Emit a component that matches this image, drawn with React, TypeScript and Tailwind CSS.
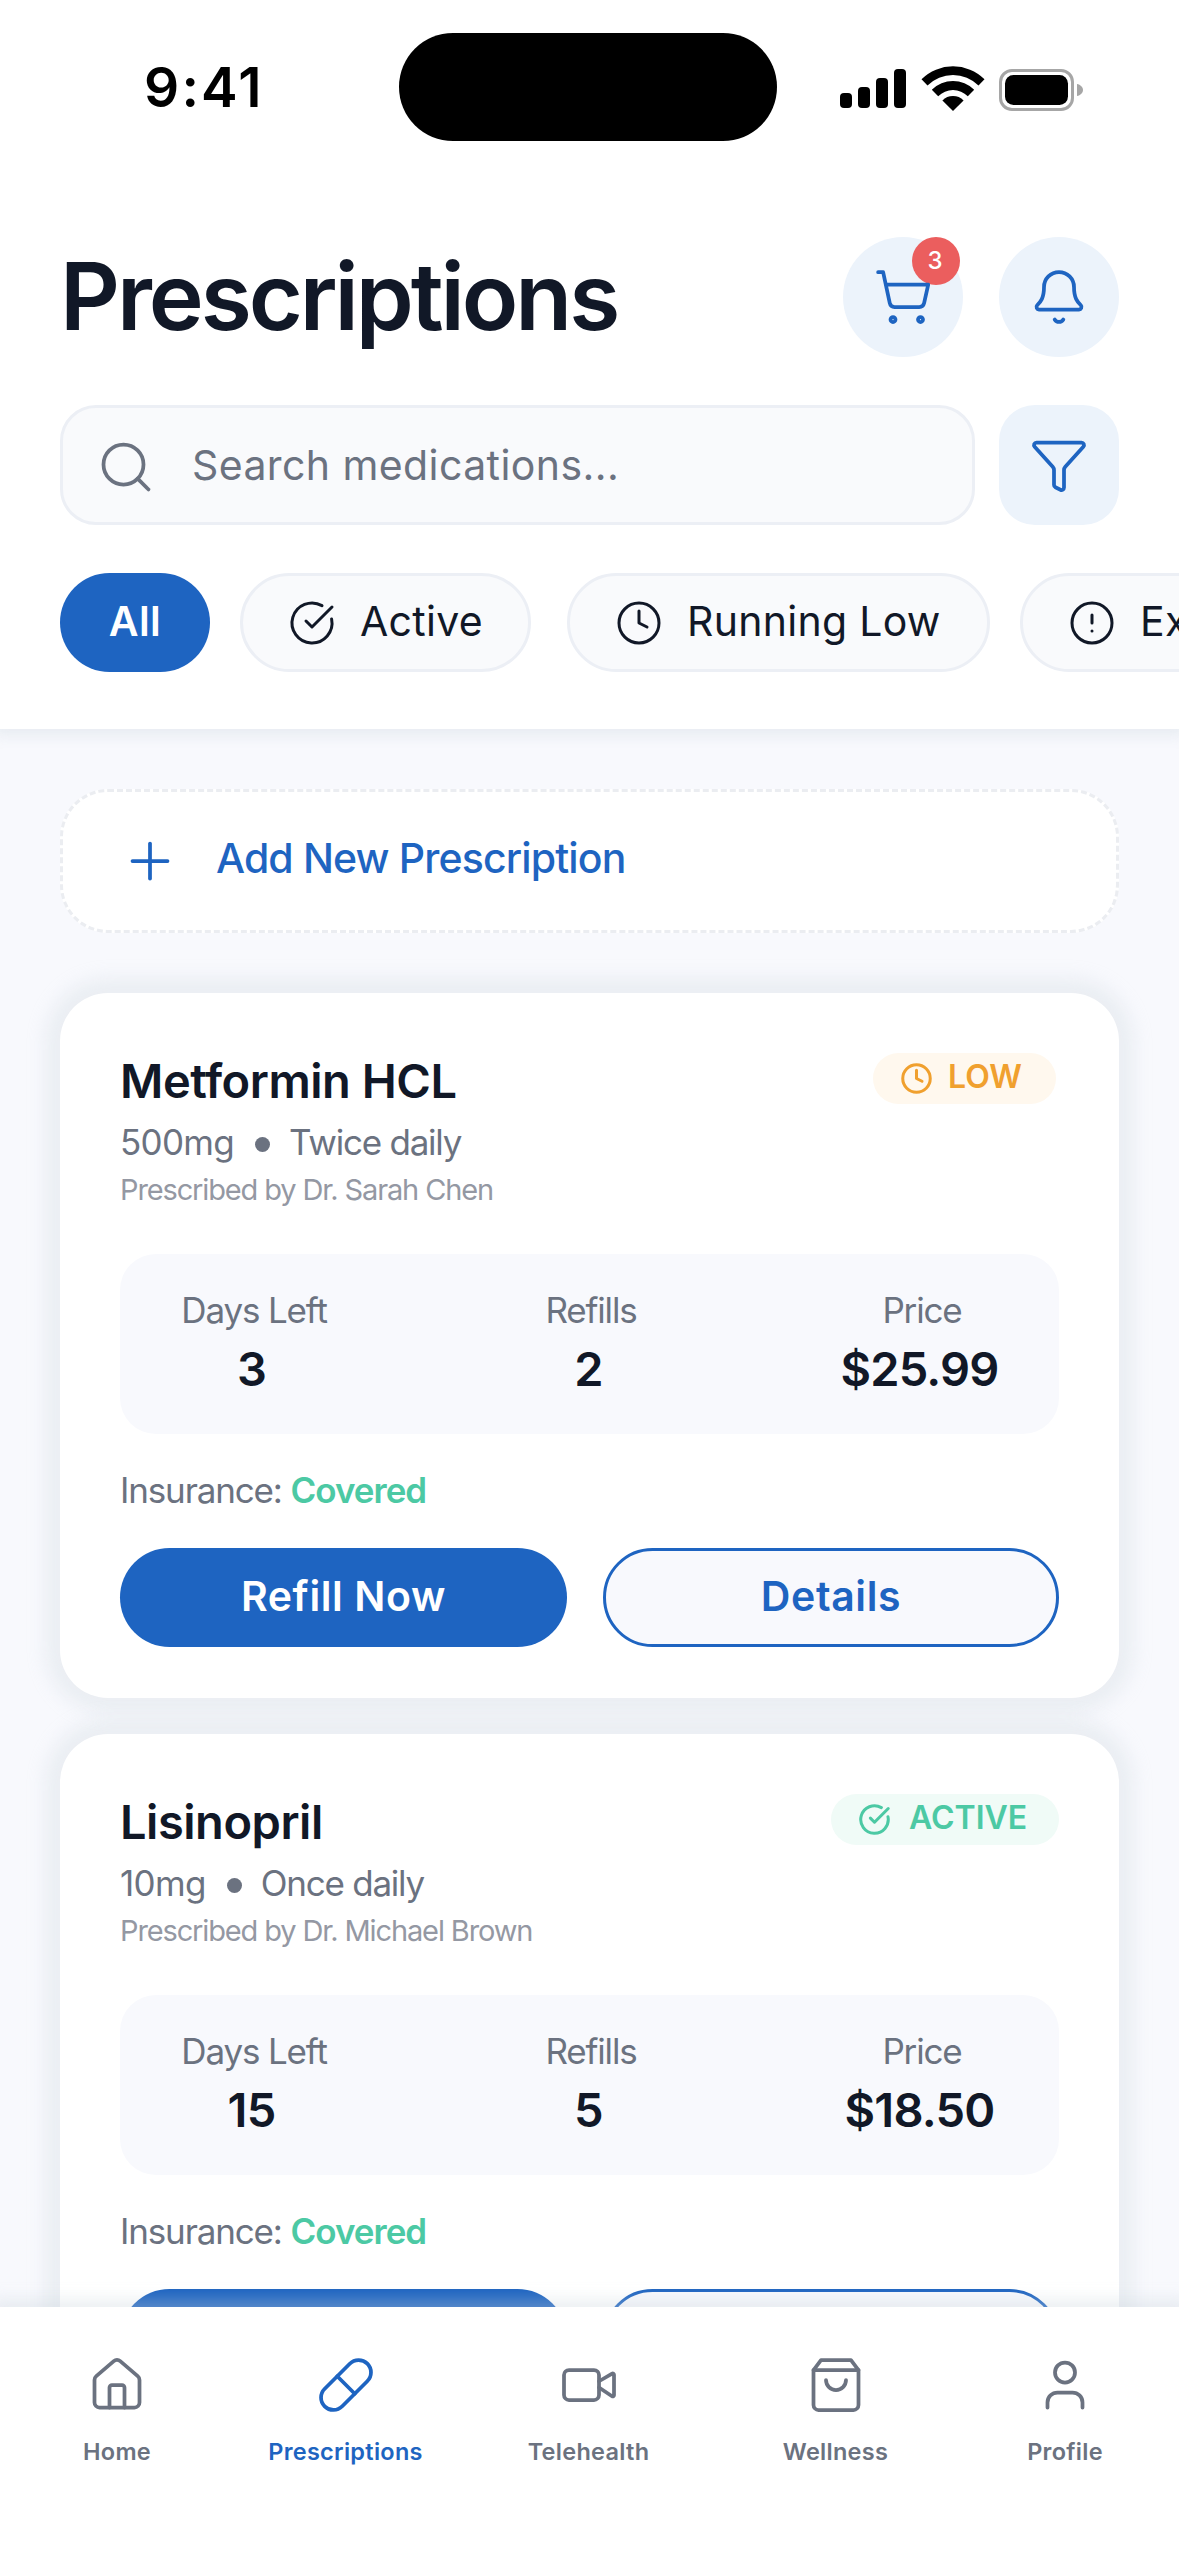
import type { ReactNode } from 'react'
import {
  Bell,
  CircleAlert,
  CircleCheckBig,
  Clock,
  Funnel,
  House,
  Pill,
  Plus,
  Search,
  ShoppingCart,
  User,
  Video,
} from 'lucide-react'

type Status = 'low' | 'active'

interface Prescription {
  name: string
  dose: string
  schedule: string
  doctor: string
  status: Status
  daysLeft: number
  refills: number
  price: string
}

const prescriptions: Prescription[] = [
  {
    name: 'Metformin HCL',
    dose: '500mg',
    schedule: 'Twice daily',
    doctor: 'Dr. Sarah Chen',
    status: 'low',
    daysLeft: 3,
    refills: 2,
    price: '$25.99',
  },
  {
    name: 'Lisinopril',
    dose: '10mg',
    schedule: 'Once daily',
    doctor: 'Dr. Michael Brown',
    status: 'active',
    daysLeft: 15,
    refills: 5,
    price: '$18.50',
  },
]

function StatusBar() {
  return (
    <div className="flex h-[237px] items-start text-black">
      <div className="w-[399px] pt-[60px] pl-[144px] text-[55px] leading-none font-semibold tracking-[0.04em]">9:41</div>
      <div className="mt-[33px] h-[108px] w-[378px] rounded-full bg-black" />
      <div className="mt-[66px] ml-[63px] flex">
        <svg width="66" height="45" viewBox="0 0 66 45" fill="currentColor">
          <rect x="0" y="27" width="12" height="15" rx="4" />
          <rect x="18" y="21" width="12" height="21" rx="4" />
          <rect x="36" y="12" width="12" height="30" rx="4" />
          <rect x="54" y="3" width="12" height="39" rx="4" />
        </svg>
        <svg className="ml-[15px]" width="64" height="45" viewBox="0 0 64 45" fill="currentColor">
          <path d="M.5 13.200A45 45 0 0 1 63.500 13.200L57.500 19.500A36 36 0 0 0 6.500 19.500Z" />
          <path d="M10.800 23.800A30 30 0 0 1 53.200 23.800L46.800 30.200A21 21 0 0 0 17.200 30.200Z" />
          <path d="M21.400 34.400A15 15 0 0 1 42.600 34.400L32 45Z" />
        </svg>
        <svg className="ml-[14px]" width="84" height="48" viewBox="0 0 84 48">
          <rect x="1.500" y="4.500" width="72" height="39" rx="11.500" fill="none" stroke="#a6a6a6" strokeWidth="3" />
          <rect x="6" y="9" width="63" height="30" rx="8.500" fill="#000" />
          <path d="M78 18v12c3.500-.7 6-3.200 6-6s-2.500-5.300-6-6Z" fill="#a6a6a6" />
        </svg>
      </div>
    </div>
  )
}

function Chip({ icon, label, className = '' }: { icon: ReactNode; label: string; className?: string }) {
  return (
    <button
      className={`flex h-[99px] shrink-0 items-center gap-6 rounded-full border-[3px] border-[#eceff5] bg-[#f9fafc] pl-[45px] text-[41px] leading-none text-[#111827] ${className}`}
    >
      {icon}
      <span className="pb-[3px] tracking-[0.007em] whitespace-nowrap">{label}</span>
    </button>
  )
}

function Header() {
  return (
    <header className="relative z-10 h-[729px] shrink-0 bg-white shadow-[0_0_13px_7px_rgba(200,211,220,0.32)]">
      <StatusBar />
      <div className="flex h-[120px] items-center justify-between px-[60px]">
        <h1 className="pb-[2px] text-[93px] leading-none font-semibold tracking-[-0.033em] text-[#111827]">Prescriptions</h1>
        <div className="flex gap-9 text-[#1e64c1]">
          <button className="relative flex size-[120px] items-center justify-center rounded-full bg-[#ecf3fb]">
            <span className="absolute top-0 right-[3px] flex size-12 items-center justify-center rounded-full bg-[#eb5e5e] pr-0.5 text-[24px] leading-none font-medium text-white">
              3
            </span>
            <ShoppingCart className="relative" size={60} strokeWidth={1.5} />
          </button>
          <button className="flex size-[120px] items-center justify-center rounded-full bg-[#ecf3fb]">
            <Bell size={60} strokeWidth={1.5} />
          </button>
        </div>
      </div>

      <div className="mt-12 flex gap-6 px-[60px]">
        <div className="flex h-[120px] w-[915px] items-center rounded-[36px] border-[3px] border-[#eceff5] bg-[#f9fafc] pl-[33px] text-[#6b7280]">
          <Search className="mt-1" size={60} strokeWidth={1.5} />
          <span className="ml-9 text-[41px] leading-none tracking-[0.01em]">Search medications...</span>
        </div>
        <button className="flex size-[120px] items-center justify-center rounded-[36px] bg-[#ecf3fb] text-[#1e64c1]">
          <Funnel size={60} strokeWidth={1.5} />
        </button>
      </div>

      <div className="mt-12 flex overflow-hidden pl-[60px]">
        <button className="flex h-[99px] w-[150px] shrink-0 items-center justify-center rounded-full bg-[#1e64c1] pb-[3px] text-[41px] leading-none font-semibold tracking-[0.01em] text-white">
          All
        </button>
        <Chip className="ml-[30px] w-[291px]" icon={<CircleCheckBig size={48} strokeWidth={1.5} />} label="Active" />
        <Chip className="ml-9 w-[423px]" icon={<Clock size={48} strokeWidth={1.5} />} label="Running Low" />
        <Chip className="ml-[30px] w-[309px]" icon={<CircleAlert size={48} strokeWidth={1.5} />} label="Expired" />
      </div>
    </header>
  )
}

function StatusBadge({ status }: { status: Status }) {
  if (status === 'low') {
    return (
      <span className="mr-[3px] flex h-[51px] w-[183px] items-center rounded-full bg-[#fff8ee] pl-[27px] text-[32px] leading-none font-semibold text-[#f0a02e]">
        <Clock size={33} strokeWidth={2.2} />
        <span className="ml-[15px] pb-[3px]">LOW</span>
      </span>
    )
  }
  return (
    <span className="flex h-[51px] w-[228px] items-center rounded-full bg-[#f0fbf7] pl-[27px] text-[32px] leading-none font-semibold text-[#4cc9a4]">
      <CircleCheckBig size={33} strokeWidth={2.2} />
      <span className="ml-[18px] pb-[3px]">ACTIVE</span>
    </span>
  )
}

function Stat({ label, value }: { label: string; value: string | number }) {
  return (
    <div className="flex flex-col items-center">
      <span className="text-[35px] leading-none tracking-[-0.033em] text-[#6b7280]">{label}</span>
      <span className="mt-[17px] pr-[5px] text-[47px] leading-none font-semibold tracking-[-0.017em] text-[#111827]">{value}</span>
    </div>
  )
}

function PrescriptionCard({ item }: { item: Prescription }) {
  return (
    <article className="h-[705px] shrink-0 rounded-[48px] bg-white p-[60px] shadow-[0_0_18px_15px_rgba(200,211,220,0.28)]">
      <div className="flex items-start justify-between">
        <div className="pt-1">
          <h2 className="text-[47px] leading-none font-semibold tracking-[-0.01em] text-[#111827]">{item.name}</h2>
          <p className="mt-[21px] flex items-center text-[35px] leading-none tracking-[-0.02em] text-[#6b7280]">
            {item.dose}
            <span className="mt-1 mr-[19px] ml-[21px] size-[15px] rounded-full bg-[#6b7280]" />
            <span className="tracking-[-0.035em]">{item.schedule}</span>
          </p>
          <p className="mt-[15px] text-[29px] leading-none tracking-[-0.039em] text-[#9498a3]">Prescribed by {item.doctor}</p>
        </div>
        <StatusBadge status={item.status} />
      </div>

      <div className="mt-[50px] grid h-[180px] grid-cols-[268px_406px_256px] rounded-[36px] bg-[#f8f9fd] pt-[39px]">
        <Stat label="Days Left" value={item.daysLeft} />
        <Stat label="Refills" value={item.refills} />
        <Stat label="Price" value={item.price} />
      </div>

      <p className="mt-[39px] text-[35px] leading-none tracking-[-0.033em] text-[#6b7280]">
        Insurance: <span className="font-semibold tracking-[-0.028em] text-[#4cc9a4]">Covered</span>
      </p>

      <div className="mt-10 flex gap-9 text-[41px] leading-none font-semibold tracking-[0.015em]">
        <button className="h-[99px] w-[447px] rounded-full bg-[#1e64c1] pb-[3px] text-white">Refill Now</button>
        <button className="h-[99px] w-[456px] rounded-full border-[3px] border-[#1e64c1] bg-[#f8f9fd] pb-[3px] text-[#1e64c1]">
          Details
        </button>
      </div>
    </article>
  )
}

function ShoppingBagIcon() {
  return (
    <svg width="60" height="60" viewBox="0 0 24 24" fill="none" stroke="currentColor" strokeWidth="1.5" strokeLinecap="round" strokeLinejoin="round">
      <path d="M6 2 3 6v14a2 2 0 0 0 2 2h14a2 2 0 0 0 2-2V6l-3-4Z" />
      <path d="M3 6h18" />
      <path d="M16 10a4 4 0 0 1-8 0" />
    </svg>
  )
}

const tabs = [
  { label: 'Home', icon: <House size={60} strokeWidth={1.5} /> },
  { label: 'Prescriptions', icon: <Pill size={60} strokeWidth={1.5} />, active: true },
  { label: 'Telehealth', icon: <Video size={60} strokeWidth={1.5} /> },
  { label: 'Wellness', icon: <ShoppingBagIcon /> },
  { label: 'Profile', icon: <User size={60} strokeWidth={1.5} /> },
]

function TabBar() {
  return (
    <nav className="relative z-10 grid h-[249px] shrink-0 grid-cols-[234px_223px_263px_231px_228px] bg-white pt-12 shadow-[0_0_14px_8px_rgba(200,211,220,0.35)]">
      {tabs.map((tab) => (
        <button key={tab.label} className={`flex flex-col items-center ${tab.active ? 'text-[#1e64c1]' : 'text-[#6b7280]'}`}>
          {tab.icon}
          <span className="mt-[25px] text-[23.5px] leading-none font-semibold tracking-[0.012em]">{tab.label}</span>
        </button>
      ))}
    </nav>
  )
}

export default function App() {
  return (
    <div className="flex h-[2556px] w-[1179px] flex-col overflow-hidden bg-[#f8f9fd] font-['Inter','Liberation_Sans',sans-serif]">
      <Header />
      <main className="flex min-h-0 flex-1 flex-col overflow-hidden px-[60px] pt-[60px]">
        <button className="flex h-36 shrink-0 items-center rounded-[48px] border-[3px] border-dashed border-[#ebedf1] bg-white pl-[57px] text-[#1e64c1]">
          <Plus size={60} strokeWidth={1.5} />
          <span className="ml-9 pb-[6px] text-[41px] leading-none font-medium tracking-[-0.021em]">Add New Prescription</span>
        </button>
        <div className="mt-[60px] flex flex-col gap-9">
          {prescriptions.map((item) => (
            <PrescriptionCard key={item.name} item={item} />
          ))}
        </div>
      </main>
      <TabBar />
    </div>
  )
}
